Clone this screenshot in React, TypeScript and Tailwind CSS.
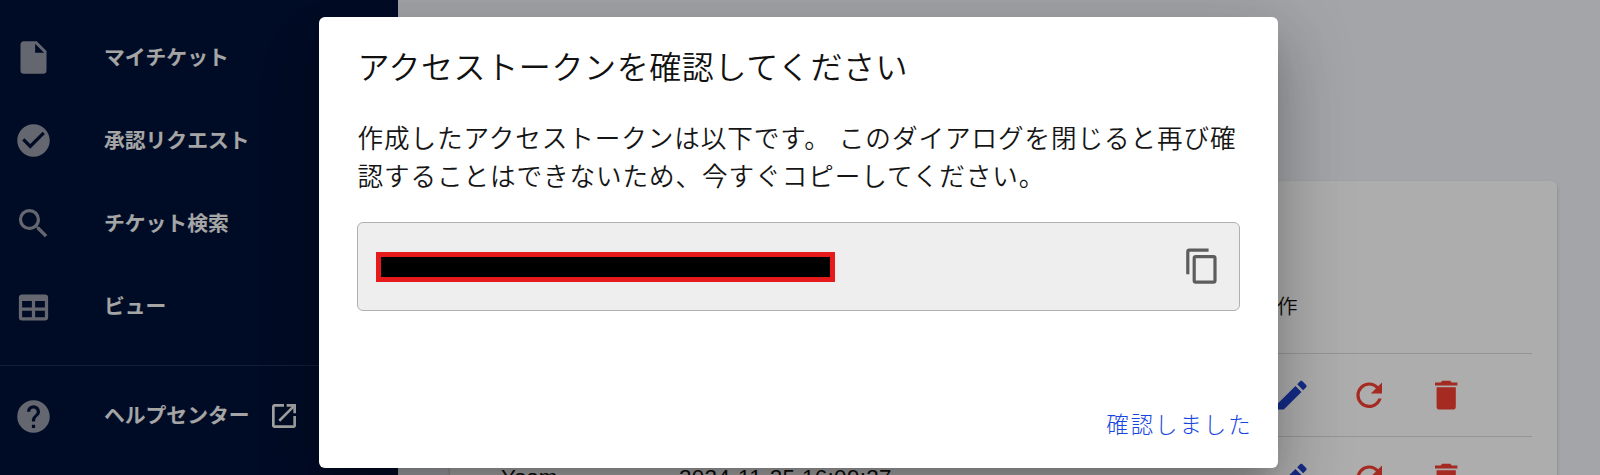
import React from "react";

const paths = {
  file: "M13,9V3.5L18.5,9M6,2C4.89,2 4,2.89 4,4V20A2,2 0 0,0 6,22H18A2,2 0 0,0 20,20V8L14,2H6Z",
  check: "M12 2C6.5 2 2 6.5 2 12S6.5 22 12 22 22 17.5 22 12 17.5 2 12 2M10 17L5 12L6.41 10.59L10 14.17L17.59 6.58L19 8L10 17Z",
  magnify: "M9.5,3A6.5,6.5 0 0,1 16,9.5C16,11.11 15.41,12.59 14.44,13.73L14.71,14H15.5L20.5,19L19,20.5L14,15.5V14.71L13.73,14.44C12.59,15.41 11.11,16 9.5,16A6.5,6.5 0 0,1 3,9.5A6.5,6.5 0 0,1 9.5,3M9.5,5C7,5 5,7 5,9.5C5,12 7,14 9.5,14C12,14 14,12 14,9.5C14,7 12,5 9.5,5Z",
  table: "M5,4H19A2,2 0 0,1 21,6V18A2,2 0 0,1 19,20H5A2,2 0 0,1 3,18V6A2,2 0 0,1 5,4M5,8V12H11V8H5M13,8V12H19V8H13M5,14V18H11V14H5M13,14V18H19V14H13Z",
  help: "M15.07,11.25L14.17,12.17C13.45,12.89 13,13.5 13,15H11V14.5C11,13.39 11.45,12.39 12.17,11.67L13.41,10.41C13.78,10.05 14,9.55 14,9C14,7.89 13.1,7 12,7A2,2 0 0,0 10,9H8A4,4 0 0,1 12,5A4,4 0 0,1 16,9C16,9.88 15.64,10.67 15.07,11.25M13,19H11V17H13M12,2A10,10 0 0,0 2,12A10,10 0 0,0 12,22A10,10 0 0,0 22,12C22,6.47 17.5,2 12,2Z",
  open: "M14,3V5H17.59L7.76,14.83L9.17,16.24L19,6.41V10H21V3M19,19H5V5H12V3H5C3.89,3 3,3.9 3,5V19A2,2 0 0,0 5,21H19A2,2 0 0,0 21,19V12H19V19Z",
  pencil: "M20.71,7.04C21.1,6.65 21.1,6 20.71,5.63L18.37,3.29C18,2.9 17.35,2.9 16.96,3.29L15.12,5.12L18.87,8.87M3,17.25V21H6.75L17.81,9.93L14.06,6.18L3,17.25Z",
  refresh: "M17.65,6.35C16.2,4.9 14.21,4 12,4A8,8 0 0,0 4,12A8,8 0 0,0 12,20C15.73,20 18.84,17.45 19.73,14H17.65C16.83,16.33 14.61,18 12,18A6,6 0 0,1 6,12A6,6 0 0,1 12,6C13.66,6 15.14,6.69 16.22,7.78L13,11H20V4L17.65,6.35Z",
  trash: "M19,4H15.5L14.5,3H9.5L8.5,4H5V6H19M6,19A2,2 0 0,0 8,21H16A2,2 0 0,0 18,19V7H6V19Z",
  copy: "M19,21H8V7H19M19,5H8A2,2 0 0,0 6,7V21A2,2 0 0,0 8,23H19A2,2 0 0,0 21,21V7A2,2 0 0,0 19,5M16,1H4A2,2 0 0,0 2,3V17H4V3H16V1Z",
};

type IconName = keyof typeof paths;

function Icon({ name, className }: { name: IconName; className: string }) {
  return (
    <svg viewBox="0 0 24 24" fill="currentColor" className={`shrink-0 ${className}`} aria-hidden="true">
      <path d={paths[name]} />
    </svg>
  );
}

function NavItem({ icon, label, external }: { icon: IconName; label: string; external?: boolean }) {
  return (
    <a className="flex h-[83.2px] items-center pl-[14.4px]">
      <Icon name={icon} className="size-[39px] text-[#9699a5]" />
      <span className="ml-[50.6px] text-[20.8px] leading-8 font-bold whitespace-nowrap text-[#f4f4f4]">{label}</span>
      {external && <Icon name="open" className="ml-[18px] size-8 text-[#f4f4f4]" />}
    </a>
  );
}

function TableRow({ name, date }: { name: string; date: string }) {
  return (
    <div className="flex h-[83px] shrink-0 items-center border-t border-[#dcdcdc] pl-[26px] text-[22.4px] text-[#111]">
      <span className="w-[178px]">{name}</span>
      <span className="w-[594px] tracking-[0.35px]">{date}</span>
      <div className="flex gap-[38.4px]">
        <Icon name="pencil" className="size-[38.4px] text-[#1f41c9]" />
        <Icon name="refresh" className="size-[38.4px] text-[#f33f33]" />
        <Icon name="trash" className="size-[38.4px] text-[#f33f33]" />
      </div>
    </div>
  );
}

export default function App() {
  return (
    <div className="relative h-[475px] w-[1600px] overflow-hidden font-['Liberation_Sans','Noto_Sans_CJK_JP',sans-serif]">
      <div className="flex h-full bg-[#f2f4f9]">
        <nav className="w-[398px] shrink-0 bg-[#001338] pt-[16px]">
          <NavItem icon="file" label="マイチケット" />
          <NavItem icon="check" label="承認リクエスト" />
          <NavItem icon="magnify" label="チケット検索" />
          <NavItem icon="table" label="ビュー" />
          <div className="mt-[16px] border-t border-[#1e2f50] pt-[9px]">
            <NavItem icon="help" label="ヘルプセンター" external />
          </div>
        </nav>
        <main className="min-w-0 flex-1 pt-[181px] pr-[43px] pl-[52px]">
          <section className="flex h-[420px] flex-col rounded-md bg-white px-[25px] shadow-[0_3px_2px_-2px_rgba(0,0,0,0.2),0_2px_2px_rgba(0,0,0,0.14),0_2px_5px_rgba(0,0,0,0.12)]">
            <div className="flex h-[172px] shrink-0 items-end pb-[30px] pl-[781px] text-[20.8px] leading-8 font-[350] text-[#111]">操作</div>
            <TableRow name="Yoom" date="2024-11-25 16:09:20" />
            <TableRow name="Yoom" date="2024-11-25 16:09:27" />
          </section>
        </main>
      </div>

      <div className="absolute inset-0 bg-black/32">
        <div
          role="dialog"
          className="mt-[17px] ml-[319px] flex h-[451px] w-[959px] flex-col rounded-[6px] bg-white px-[38.4px] pt-[27px] shadow-[0_17.6px_24px_-11.2px_rgba(0,0,0,0.2),0_38.4px_60.8px_4.8px_rgba(0,0,0,0.14),0_14.4px_73.6px_12.8px_rgba(0,0,0,0.12)]"
        >
          <h2 className="h-[76px] text-[32px] leading-[48px] font-[350] tracking-[0.019em] whitespace-nowrap text-[#111]">
            アクセストークンを確認してください
          </h2>
          <p className="text-[25.6px] leading-[38.4px] font-[350] tracking-[0.036em] whitespace-nowrap text-[#151515]">
            作成したアクセストークンは以下です。 このダイアログを閉じると再び確
            <br />
            認することはできないため、今すぐコピーしてください。
          </p>
          <div className="mt-[25px] flex h-[89px] shrink-0 items-center justify-between rounded-[6px] border border-[#b0b0b0] bg-[#eee] pr-[17px] pl-[17.6px]">
            <div className="mt-px h-[30px] w-[459px] border-5 border-[#e61a1a] bg-black" />
            <Icon name="copy" className="size-[38.4px] text-[#5c5c5c]" />
          </div>
          <button className="mt-[99px] -mr-[13px] self-end text-[22.4px] leading-8 font-light tracking-[0.0892857em] text-[#1646e0]">
            確認しました
          </button>
        </div>
      </div>
    </div>
  );
}
